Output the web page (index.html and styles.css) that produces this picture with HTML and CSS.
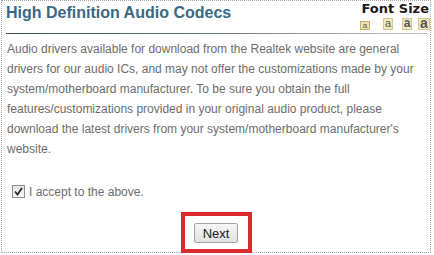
FILE: index.html
```html
<!DOCTYPE html>
<html>
<head>
<meta charset="utf-8">
<link rel="stylesheet" href="styles.css">
</head>
<body>
<div class="panel">
  <div class="header">
    <h1 class="title">High Definition Audio Codecs</h1>
    <div class="fontsize">
      <div class="fs-label">Font Size</div>
      <div class="fs-icons">
        <span class="fs fs1">a</span>
        <span class="fs fs2">a</span>
        <span class="fs fs3">a</span>
        <span class="fs fs4">a</span>
      </div>
    </div>
  </div>
  <div class="rule"></div>
  <p class="text">Audio drivers available for download from the Realtek website are general drivers for our audio ICs, and may not offer the customizations made by your system/motherboard manufacturer. To be sure you obtain the full features/customizations provided in your original audio product, please download the latest drivers from your system/motherboard manufacturer's website.</p>
  <label class="accept">
    <span class="checkbox"><svg width="9" height="9" viewBox="0 0 9 9"><path d="M1 4.5 L3.5 7.5 L8 1" fill="none" stroke="#2b2b2b" stroke-width="1.8"/></svg></span>
    <span class="accept-text">I accept to the above.</span>
  </label>
  <div class="actions">
    <div class="highlight"><button class="next">Next</button></div>
  </div>
</div>
</body>
</html>
```

FILE: styles.css
```css
html, body {
  margin: 0;
  padding: 0;
  background: #ffffff;
}
body {
  font-family: "Liberation Sans", Arial, sans-serif;
}
.panel {
  margin-left: 1px;
  width: 430px;
  height: 253px;
  box-sizing: border-box;
  border: 1px dotted #a9a9a9;
  display: flex;
  flex-direction: column;
}
.header {
  height: 32px;
  display: flex;
  justify-content: space-between;
  align-items: flex-start;
}
.title {
  margin: 3px 0 0 4px;
  font-size: 16px;
  line-height: 18px;
  font-weight: bold;
  color: #386a85;
}
.fontsize {
  padding-top: 1px;
  display: flex;
  flex-direction: column;
  align-items: flex-end;
}
.fs-label {
  font-family: "DejaVu Sans", Verdana, sans-serif;
  font-weight: bold;
  font-size: 13px;
  line-height: 14px;
  height: 14px;
  color: #1a1a1a;
  margin-right: 1px;
  margin-bottom: 2px;
}
.fs-icons {
  display: flex;
  align-items: flex-end;
  height: 12px;
}
.fs {
  box-sizing: border-box;
  display: block;
  text-align: center;
  background: #efeac4;
  border: 1px solid #d3c78c;
  color: #555555;
  font-family: "Liberation Sans", Arial, sans-serif;
  height: 12px;
  line-height: 9px;
}
.fs1 {
  width: 10px;
  height: 9px;
  font-size: 8px;
  line-height: 7px;
  background: #e7e0b0;
  border-color: #c2b272;
}
.fs2 {
  width: 10px;
  font-size: 11px;
  margin-left: 13px;
}
.fs3 {
  width: 10px;
  font-size: 12px;
  margin-left: 9px;
  font-weight: bold;
}
.fs4 {
  width: 12px;
  font-size: 14px;
  margin-left: 6px;
  font-weight: bold;
}
.rule {
  height: 1px;
  margin: 0 2px 0 4px;
  background: linear-gradient(to right, #3e4c55, #6a7880 50%, #c4c8cc);
}
.text {
  margin: 5px 10px 0 5px;
  font-size: 12px;
  line-height: 20px;
  color: #6d6d6d;
}
.accept {
  margin-top: 26px;
  padding-left: 10px;
  display: flex;
  align-items: center;
  height: 13px;
}
.checkbox {
  box-sizing: border-box;
  width: 13px;
  height: 13px;
  border: 1px solid #8f8f8f;
  background: linear-gradient(#e4e4e4, #fafafa);
  display: flex;
  align-items: center;
  justify-content: center;
}
.accept-text {
  margin-left: 4px;
  font-size: 12px;
  color: #6d6d6d;
}
.actions {
  margin-top: 14px;
  margin-bottom: -1px;
  display: flex;
  justify-content: center;
}
.highlight {
  margin-left: 1px;
  border: 4px solid #dc2b2e;
  padding: 7px 10px 6px 9px;
  background: #ffffff;
}
.next {
  display: block;
  width: 44px;
  height: 20px;
  padding: 0;
  box-sizing: border-box;
  border: 1px solid #a3a3a3;
  border-radius: 2px;
  background: linear-gradient(#f7f7f7, #e2e2e2);
  font-family: "Liberation Sans", Arial, sans-serif;
  font-size: 13px;
  color: #222222;
}
```
